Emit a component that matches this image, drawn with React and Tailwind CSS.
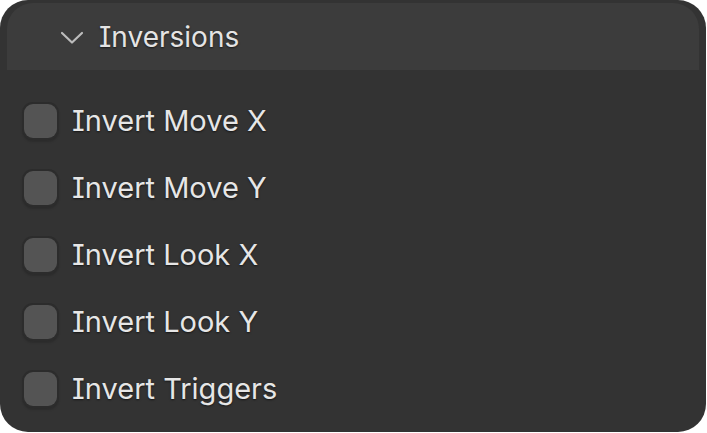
import React from 'react';

const options = ['Invert Move X', 'Invert Move Y', 'Invert Look X', 'Invert Look Y', 'Invert Triggers'];

const Checkbox = () => (
  <div className="w-[37px] h-[38px] shrink-0 rounded-[11px] bg-[#2c2c2c] p-[2px] shadow-[0_2px_2px_rgba(0,0,0,0.15)]">
    <div className="w-full h-full rounded-[9px] bg-[#545454]" />
  </div>
);

const App = () => {
  return (
    <div
      className="w-[707px] h-[433px] bg-white [font-feature-settings:'cv08'_1]"
      style={{ fontFamily: 'Inter, "Noto Sans", sans-serif' }}
    >
      <div className="w-[706px] h-[432px] rounded-[28px] bg-[#333333] pt-[3px] overflow-hidden">
        {/* panel header */}
        <div className="mx-[7px] h-[67px] rounded-t-[26px] bg-[#3c3c3c] flex items-center pl-[53px]">
          <svg width="24" height="14" viewBox="0 0 24 14" className="mt-[2px]">
            <path d="M2 2 L12 11.5 L22 2" fill="none" stroke="#bcbcbc" strokeWidth="2.2" strokeLinecap="round" strokeLinejoin="round" />
          </svg>
          <span className="ml-[15px] text-[28px] text-[#e4e4e4] [text-shadow:0_1px_2px_rgba(0,0,0,0.6)]">Inversions</span>
        </div>
        {/* checkbox rows */}
        <div className="pt-[17px] flex flex-col">
          {options.map((label) => (
            <div key={label} className="h-[67px] flex items-center pl-[22px] gap-[13px]">
              <Checkbox />
              <span className="text-[29px] text-[#e6e6e6] [text-shadow:0_1px_2px_rgba(0,0,0,0.6)]">{label}</span>
            </div>
          ))}
        </div>
      </div>
    </div>
  );
};

export default App;
